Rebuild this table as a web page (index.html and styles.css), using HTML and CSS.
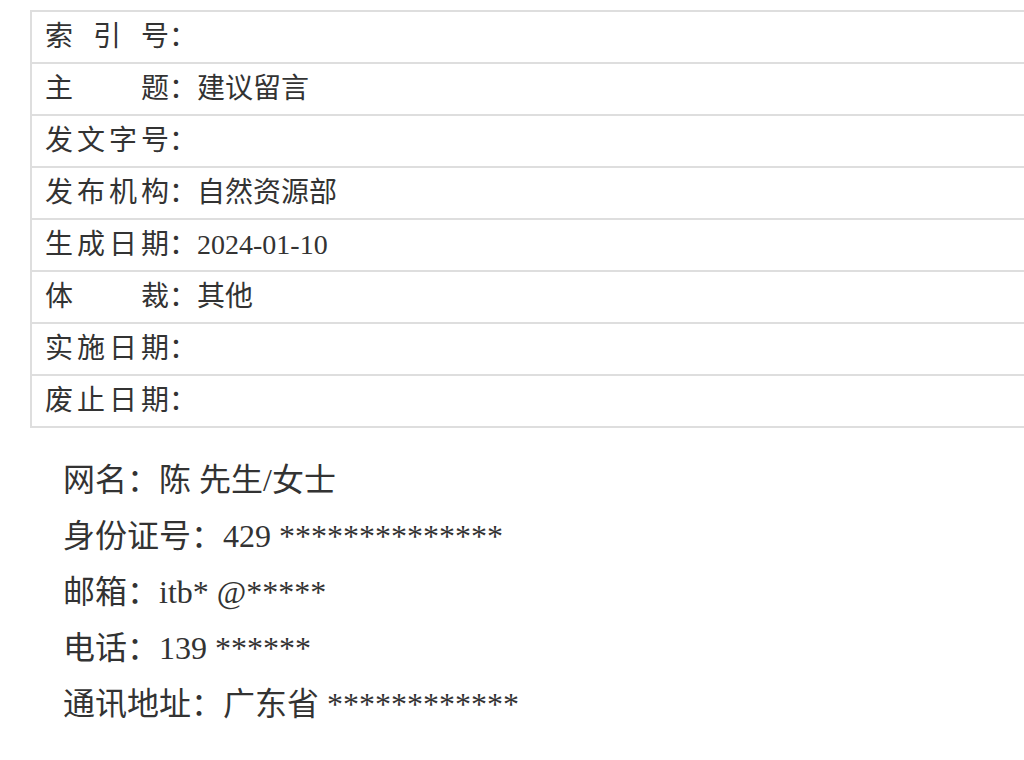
FILE: index.html
```html
<!DOCTYPE html>
<html lang="zh-CN">
<head>
<meta charset="utf-8">
<title>建议留言</title>
<link rel="stylesheet" href="styles.css">
</head>
<body>
<div class="meta">
  <div class="row"><span class="label">索引号</span><span class="colon">：</span><span class="value"></span></div>
  <div class="row"><span class="label">主题</span><span class="colon">：</span><span class="value">建议留言</span></div>
  <div class="row"><span class="label">发文字号</span><span class="colon">：</span><span class="value"></span></div>
  <div class="row"><span class="label">发布机构</span><span class="colon">：</span><span class="value">自然资源部</span></div>
  <div class="row"><span class="label">生成日期</span><span class="colon">：</span><span class="value">2024-01-10</span></div>
  <div class="row"><span class="label">体裁</span><span class="colon">：</span><span class="value">其他</span></div>
  <div class="row"><span class="label">实施日期</span><span class="colon">：</span><span class="value"></span></div>
  <div class="row"><span class="label">废止日期</span><span class="colon">：</span><span class="value"></span></div>
</div>
<div class="info">
  <p class="line">网名：陈 先生/女士</p>
  <p class="line">身份证号：429 **************</p>
  <p class="line">邮箱：itb* @*****</p>
  <p class="line">电话：139 ******</p>
  <p class="line">通讯地址：广东省 ************</p>
</div>
</body>
</html>
```
FILE: styles.css
```css
html, body {
  margin: 0;
  padding: 0;
  background: #fff;
}
body {
  font-family: "Liberation Serif", "Noto Sans CJK SC", serif;
  color: #333;
}
.meta {
  margin: 10px 0 0 30px;
  border-left: 2px solid #dedede;
  border-bottom: 2px solid #dedede;
}
.row {
  border-top: 2px solid #dedede;
  height: 50px;
  line-height: 50px;
  font-size: 28px;
  padding-left: 13px;
  display: flex;
  align-items: center;
  white-space: nowrap;
}
.label {
  display: inline-block;
  width: 124px;
  text-align: justify;
  text-align-last: justify;
}
.colon {
  width: 28px;
}
.info {
  margin: 24px 0 0 63px;
}
.line {
  margin: 0;
  font-size: 32px;
  line-height: 56px;
  white-space: nowrap;
}
```
